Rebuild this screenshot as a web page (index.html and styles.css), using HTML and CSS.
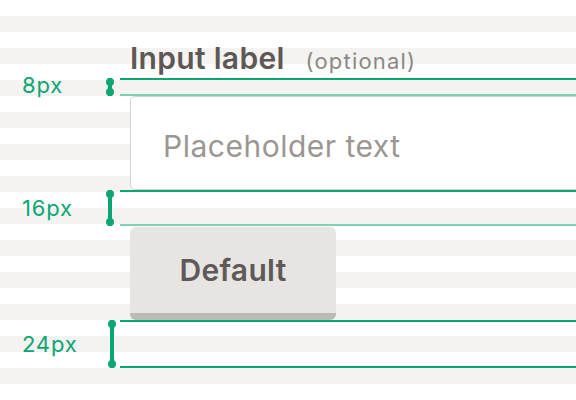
FILE: index.html
```html
<!DOCTYPE html>
<html lang="en">

<head>
    <meta charset="UTF-8">
    <title>Form spacing</title>
    <meta name="viewport" content="width=device-width, initial-scale=1.0">
    <link rel="stylesheet" href="styles.css">
</head>

<body>
    <div class="sheet">
        <div class="row label-row">
            <label class="field-label" for="field">Input label <span class="optional">(optional)</span></label>
        </div>

        <div class="gap gap-8">
            <span class="gap-name">8px</span>
            <span class="ruler"></span>
            <span class="gap-lines"></span>
        </div>

        <div class="row input-row">
            <input type="text" class="text-input" id="field" placeholder="Placeholder text" />
        </div>

        <div class="gap gap-16">
            <span class="gap-name">16px</span>
            <span class="ruler"></span>
            <span class="gap-lines"></span>
        </div>

        <div class="row button-row">
            <button class="btn">Default</button>
        </div>

        <div class="gap gap-24">
            <span class="gap-name">24px</span>
            <span class="ruler"></span>
            <span class="gap-lines"></span>
        </div>
    </div>
</body>

</html>
```

FILE: styles.css
```css
body {
    margin: 0;
    background: #fff;
    font-family: Inter, 'Liberation Sans', Arial, sans-serif;
}

/* baseline grid: grey band every other 16px */
.sheet {
    height: 384px;
    overflow: hidden;
    background: repeating-linear-gradient(to bottom, #fff 0 16px, #f4f3f1 16px 32px);
}

.row {
    padding-left: 130px;
    display: flex;
}

.label-row {
    height: 78px;
    box-sizing: border-box;
    align-items: flex-end;
    padding-bottom: 3px;
}

.field-label {
    font-size: 30px;
    line-height: 1.1;
    font-weight: 600;
    color: #5e5855;
    letter-spacing: 0.3px;
}

.optional {
    font-size: 22px;
    font-weight: 400;
    color: #8c8784;
    margin-left: 13px;
    letter-spacing: 1.2px;
}

.input-row {
    height: 94px;
}

.text-input {
    box-sizing: border-box;
    width: 520px;
    height: 94px;
    border: 1px solid #d3d0cd;
    border-radius: 5px;
    padding: 6px 0 0 32px;
    font-family: inherit;
    font-size: 30px;
    letter-spacing: 0.5px;
    color: #5e5855;
    background: #fff;
    outline: none;
}

.text-input::placeholder {
    color: #9b9692;
}

.button-row {
    height: 94px;
    align-items: flex-end;
}

.btn {
    box-sizing: border-box;
    width: 206px;
    height: 93px;
    border: none;
    border-bottom: 7px solid #bdbab6;
    border-radius: 6px;
    background: #e6e5e2;
    color: #5f5a57;
    font-family: inherit;
    font-size: 30px;
    font-weight: 600;
    letter-spacing: 0.3px;
    padding: 0;
}

/* spacing annotations */
.gap {
    display: flex;
    align-items: stretch;
}

.gap-8 {
    height: 18px;
}

.gap-16 {
    height: 36px;
}

.gap-24 {
    height: 48px;
}

.gap-name {
    box-sizing: border-box;
    width: 108px;
    padding: 0 0 1px 22px;
    display: flex;
    align-items: center;
    font-size: 22px;
    letter-spacing: 0.8px;
    color: #0ba673;
}

.gap-8 .gap-name {
    padding-bottom: 5px;
}

.ruler {
    width: 4px;
    background: #0ba673;
    position: relative;
}

.ruler::before,
.ruler::after {
    content: "";
    position: absolute;
    left: -2px;
    width: 8px;
    height: 8px;
    border-radius: 50%;
    background: #0ba673;
}

.ruler::before {
    top: 0;
}

.ruler::after {
    bottom: 0;
}

.gap-lines {
    flex: 1;
    margin-left: 8px;
    border-top: 2px solid #0ba673;
    border-bottom: 2px solid #80d2b5;
}

.gap-24 .ruler {
    margin-left: 2px;
}

.gap-24 .gap-lines {
    margin-left: 6px;
    border-bottom-color: #0ba673;
}
```
